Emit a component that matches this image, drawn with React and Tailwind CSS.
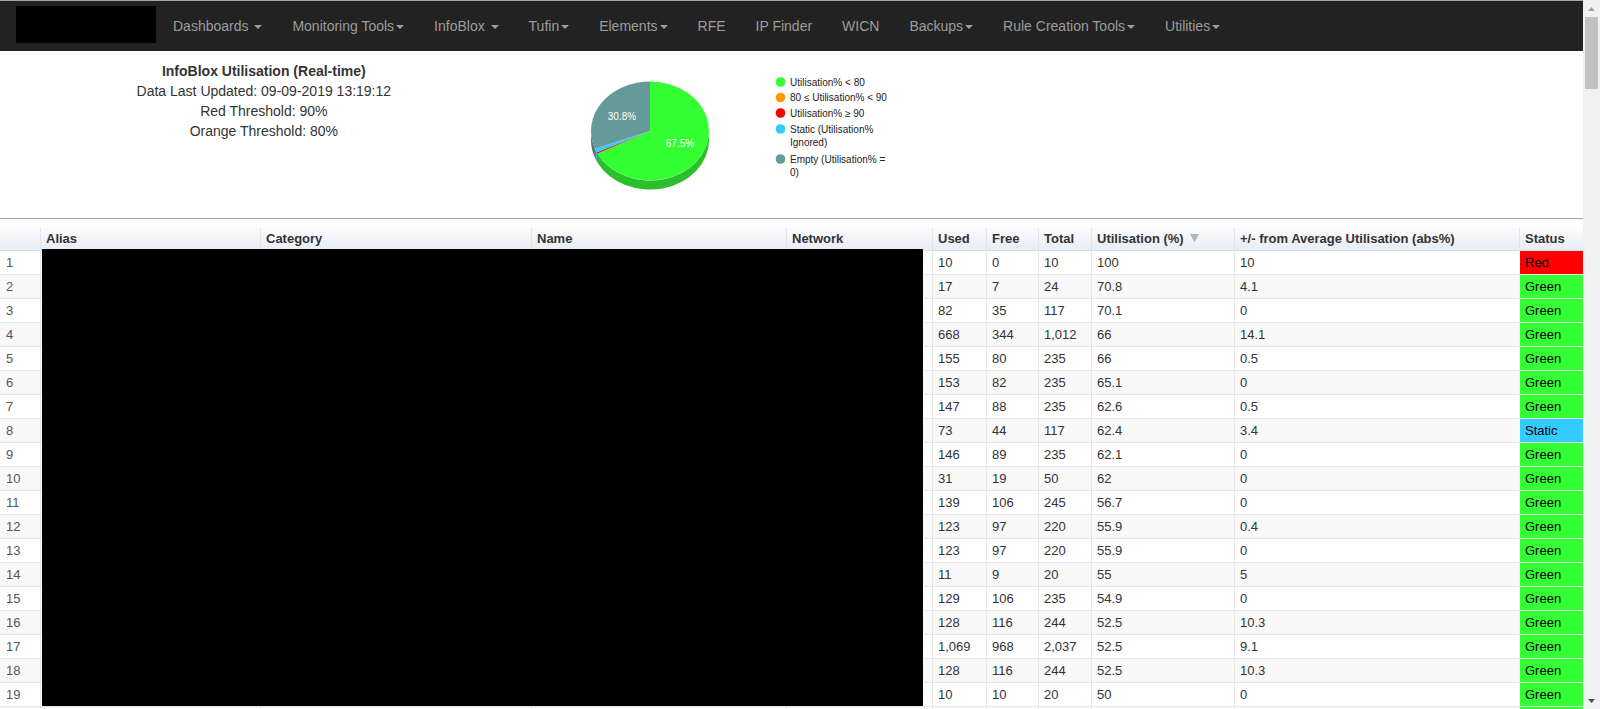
import React from "react";

const navItems = [
  { label: "Dashboards", caret: true, space: true },
  { label: "Monitoring Tools", caret: true },
  { label: "InfoBlox", caret: true, space: true },
  { label: "Tufin", caret: true },
  { label: "Elements", caret: true },
  { label: "RFE" },
  { label: "IP Finder" },
  { label: "WICN" },
  { label: "Backups", caret: true },
  { label: "Rule Creation Tools", caret: true },
  { label: "Utilities", caret: true },
];

const rows = [
  ["10", "0", "10", "100", "10", "Red"],
  ["17", "7", "24", "70.8", "4.1", "Green"],
  ["82", "35", "117", "70.1", "0", "Green"],
  ["668", "344", "1,012", "66", "14.1", "Green"],
  ["155", "80", "235", "66", "0.5", "Green"],
  ["153", "82", "235", "65.1", "0", "Green"],
  ["147", "88", "235", "62.6", "0.5", "Green"],
  ["73", "44", "117", "62.4", "3.4", "Static"],
  ["146", "89", "235", "62.1", "0", "Green"],
  ["31", "19", "50", "62", "0", "Green"],
  ["139", "106", "245", "56.7", "0", "Green"],
  ["123", "97", "220", "55.9", "0.4", "Green"],
  ["123", "97", "220", "55.9", "0", "Green"],
  ["11", "9", "20", "55", "5", "Green"],
  ["129", "106", "235", "54.9", "0", "Green"],
  ["128", "116", "244", "52.5", "10.3", "Green"],
  ["1,069", "968", "2,037", "52.5", "9.1", "Green"],
  ["128", "116", "244", "52.5", "10.3", "Green"],
  ["10", "10", "20", "50", "0", "Green"],
];

const statusBg = {
  Red: "bg-[#ff0000]",
  Green: "bg-[#33ff33]",
  Static: "bg-[#33ccff]",
};

const cols =
  "grid grid-cols-[40px_220px_271px_255px_146px_54px_52px_53px_143px_285px_64px]";

function Caret() {
  return (
    <span className="ml-[2px] inline-block h-0 w-0 border-x-[4px] border-t-[4px] border-x-transparent border-t-[#9d9d9d] align-middle" />
  );
}

function Pie() {
  const cx = 107,
    cy = 71,
    rx = 59,
    ry = 49.5,
    depth = 9;
  const P = (deg, dy = 0) => {
    const r = (deg * Math.PI) / 180;
    return `${(cx + rx * Math.sin(r)).toFixed(2)} ${(cy - ry * Math.cos(r) + dy).toFixed(2)}`;
  };
  const slices = [
    { a: 0, b: 243, top: "#33ff33", side: "#2cbf2c" },
    { a: 243, b: 244.5, top: "#ff0000", side: "#bf0000" },
    { a: 244.5, b: 249, top: "#33ccff", side: "#2699bf" },
    { a: 249, b: 360, top: "#669999", side: "#4d7373" },
  ];
  const legend = [
    { color: "#33ff33", lines: ["Utilisation% < 80"], y: 22 },
    { color: "#ff9900", lines: ["80 ≤ Utilisation% < 90"], y: 37.5 },
    { color: "#ff0000", lines: ["Utilisation% ≥ 90"], y: 53 },
    { color: "#33ccff", lines: ["Static (Utilisation%", "Ignored)"], y: 69 },
    { color: "#669999", lines: ["Empty (Utilisation% =", "0)"], y: 99 },
  ];
  return (
    <svg width="380" height="150" viewBox="0 0 380 150" className="block">
      {slices.map((s, i) => {
        const a = Math.max(s.a, 90);
        const b = Math.min(s.b, 270);
        if (a >= b) return null;
        return (
          <path
            key={"side" + i}
            fill={s.side}
            d={`M ${P(a)} A ${rx} ${ry} 0 0 1 ${P(b)} L ${P(b, depth)} A ${rx} ${ry} 0 0 0 ${P(a, depth)} Z`}
          />
        );
      })}
      {slices.map((s, i) => (
        <path
          key={"top" + i}
          fill={s.top}
          d={`M ${cx} ${cy} L ${P(s.a)} A ${rx} ${ry} 0 ${s.b - s.a > 180 ? 1 : 0} 1 ${P(s.b)} Z`}
        />
      ))}
      <text x="79" y="59.5" fill="#ffffff" fontSize="10" textAnchor="middle" fontFamily="Liberation Sans, Arial, sans-serif">
        30.8%
      </text>
      <text x="137" y="86.5" fill="#ffffff" fontSize="10" textAnchor="middle" fontFamily="Liberation Sans, Arial, sans-serif">
        67.5%
      </text>
      {legend.map((l, i) => (
        <g key={i}>
          <circle cx="237.5" cy={l.y} r="4.8" fill={l.color} />
          {l.lines.map((t, k) => (
            <text
              key={k}
              x="247"
              y={l.y + 3.5 + k * 13}
              fontSize="10"
              fill="#222222"
              fontFamily="Liberation Sans, Arial, sans-serif"
            >
              {t}
            </text>
          ))}
        </g>
      ))}
    </svg>
  );
}

function SortArrow() {
  return (
    <svg width="9" height="8" viewBox="0 0 9 8" className="ml-[6px] mb-[2px]">
      <path d="M0 0 L9 0 L4.5 8 Z" fill="#b3b3b3" />
    </svg>
  );
}

function Row({ r, i }) {
  const bg = i % 2 === 0 ? "bg-white" : "bg-[#f9f9f9]";
  return (
    <div className={`${cols} h-[24px] shrink-0 border-b border-[#e5e5e5] ${bg} text-[13px] text-[#333]`}>
      <div className="flex items-center pl-[6px] text-[#555]">{r ? i + 1 : ""}</div>
      <div className="border-l border-[#e8e8e8]" />
      <div className="border-l border-[#e8e8e8]" />
      <div className="border-l border-[#e8e8e8]" />
      <div className="border-l border-[#e8e8e8]" />
      {[0, 1, 2, 3, 4].map((k) => (
        <div key={k} className="flex items-center border-l border-[#e8e8e8] pl-[5px]">
          {r ? r[k] : ""}
        </div>
      ))}
      <div className={`flex items-center border-l border-white pl-[5px] text-black ${statusBg[r ? r[5] : "Green"]}`}>
        {r ? r[5] : ""}
      </div>
    </div>
  );
}

export default function App() {
  const headers = ["Alias", "Category", "Name", "Network", "Used", "Free", "Total"];
  return (
    <div className="flex h-[709px] w-[1600px] overflow-hidden bg-white font-['Liberation_Sans',Arial,Helvetica,sans-serif]">
      <div className="flex w-[1583px] flex-col">
        {/* Navbar */}
        <nav className="flex h-[51px] shrink-0 items-start border-t border-[#a6a6a6] bg-[#222222]">
          <div className="ml-[16px] mt-[5px] h-[37px] w-[140px] bg-black" />
          <ul className="ml-[2px] flex">
            {navItems.map((n) => (
              <li key={n.label} className="px-[15px] py-[15px] text-[14px] leading-[20px] text-[#9d9d9d] whitespace-pre">
                {n.label}
                {n.space ? " " : ""}
                {n.caret ? <Caret /> : null}
              </li>
            ))}
          </ul>
        </nav>

        {/* Summary header */}
        <div className="grid h-[168px] shrink-0 grid-cols-3 border-b border-[#a3a3a3]">
          <div className="px-[15px] pt-[10px] text-center text-[14px] leading-[20px] text-[#333]">
            <div className="font-bold">InfoBlox Utilisation (Real-time)</div>
            <div>Data Last Updated: 09-09-2019 13:19:12</div>
            <div>Red Threshold: 90%</div>
            <div>Orange Threshold: 80%</div>
          </div>
          <div className="px-[15px] pt-[9px]">
            <Pie />
          </div>
          <div />
        </div>

        {/* Table */}
        <div className="relative mt-[9px] flex min-h-0 flex-1 flex-col overflow-hidden">
          <div className={`${cols} h-[23px] shrink-0 border-b border-[#d9dde5] bg-gradient-to-b from-[#fbfcfe] to-[#e8ecf4] text-[13px] font-bold text-[#333]`}>
            <div />
            {headers.map((h) => (
              <div key={h} className="flex items-center border-l border-[#e1e5ec] pl-[5px]">
                {h}
              </div>
            ))}
            <div className="flex items-center border-l border-[#e1e5ec] pl-[5px]">
              Utilisation (%)
              <SortArrow />
            </div>
            <div className="flex items-center border-l border-[#e1e5ec] pl-[5px]">+/- from Average Utilisation (abs%)</div>
            <div className="flex items-center border-l border-[#e1e5ec] pl-[5px]">Status</div>
          </div>
          {rows.map((r, i) => (
            <Row key={i} r={r} i={i} />
          ))}
          <Row r={null} i={19} />
          <div className="absolute left-[42px] top-[21px] h-[457px] w-[881px] bg-black" />
        </div>
      </div>

      {/* Scrollbar */}
      <div className="flex w-[17px] flex-col items-center bg-[#f1f1f1]">
        <div className="flex h-[17px] w-full items-center justify-center">
          <svg width="7" height="4" viewBox="0 0 7 4">
            <path d="M0 4 L3.5 0 L7 4 Z" fill="#a3a3a3" />
          </svg>
        </div>
        <div className="h-[72px] w-[13px] bg-[#c1c1c1]" />
        <div className="flex-1" />
        <div className="flex h-[17px] w-full items-center justify-center">
          <svg width="7" height="4" viewBox="0 0 7 4">
            <path d="M0 0 L7 0 L3.5 4 Z" fill="#505050" />
          </svg>
        </div>
      </div>
    </div>
  );
}
